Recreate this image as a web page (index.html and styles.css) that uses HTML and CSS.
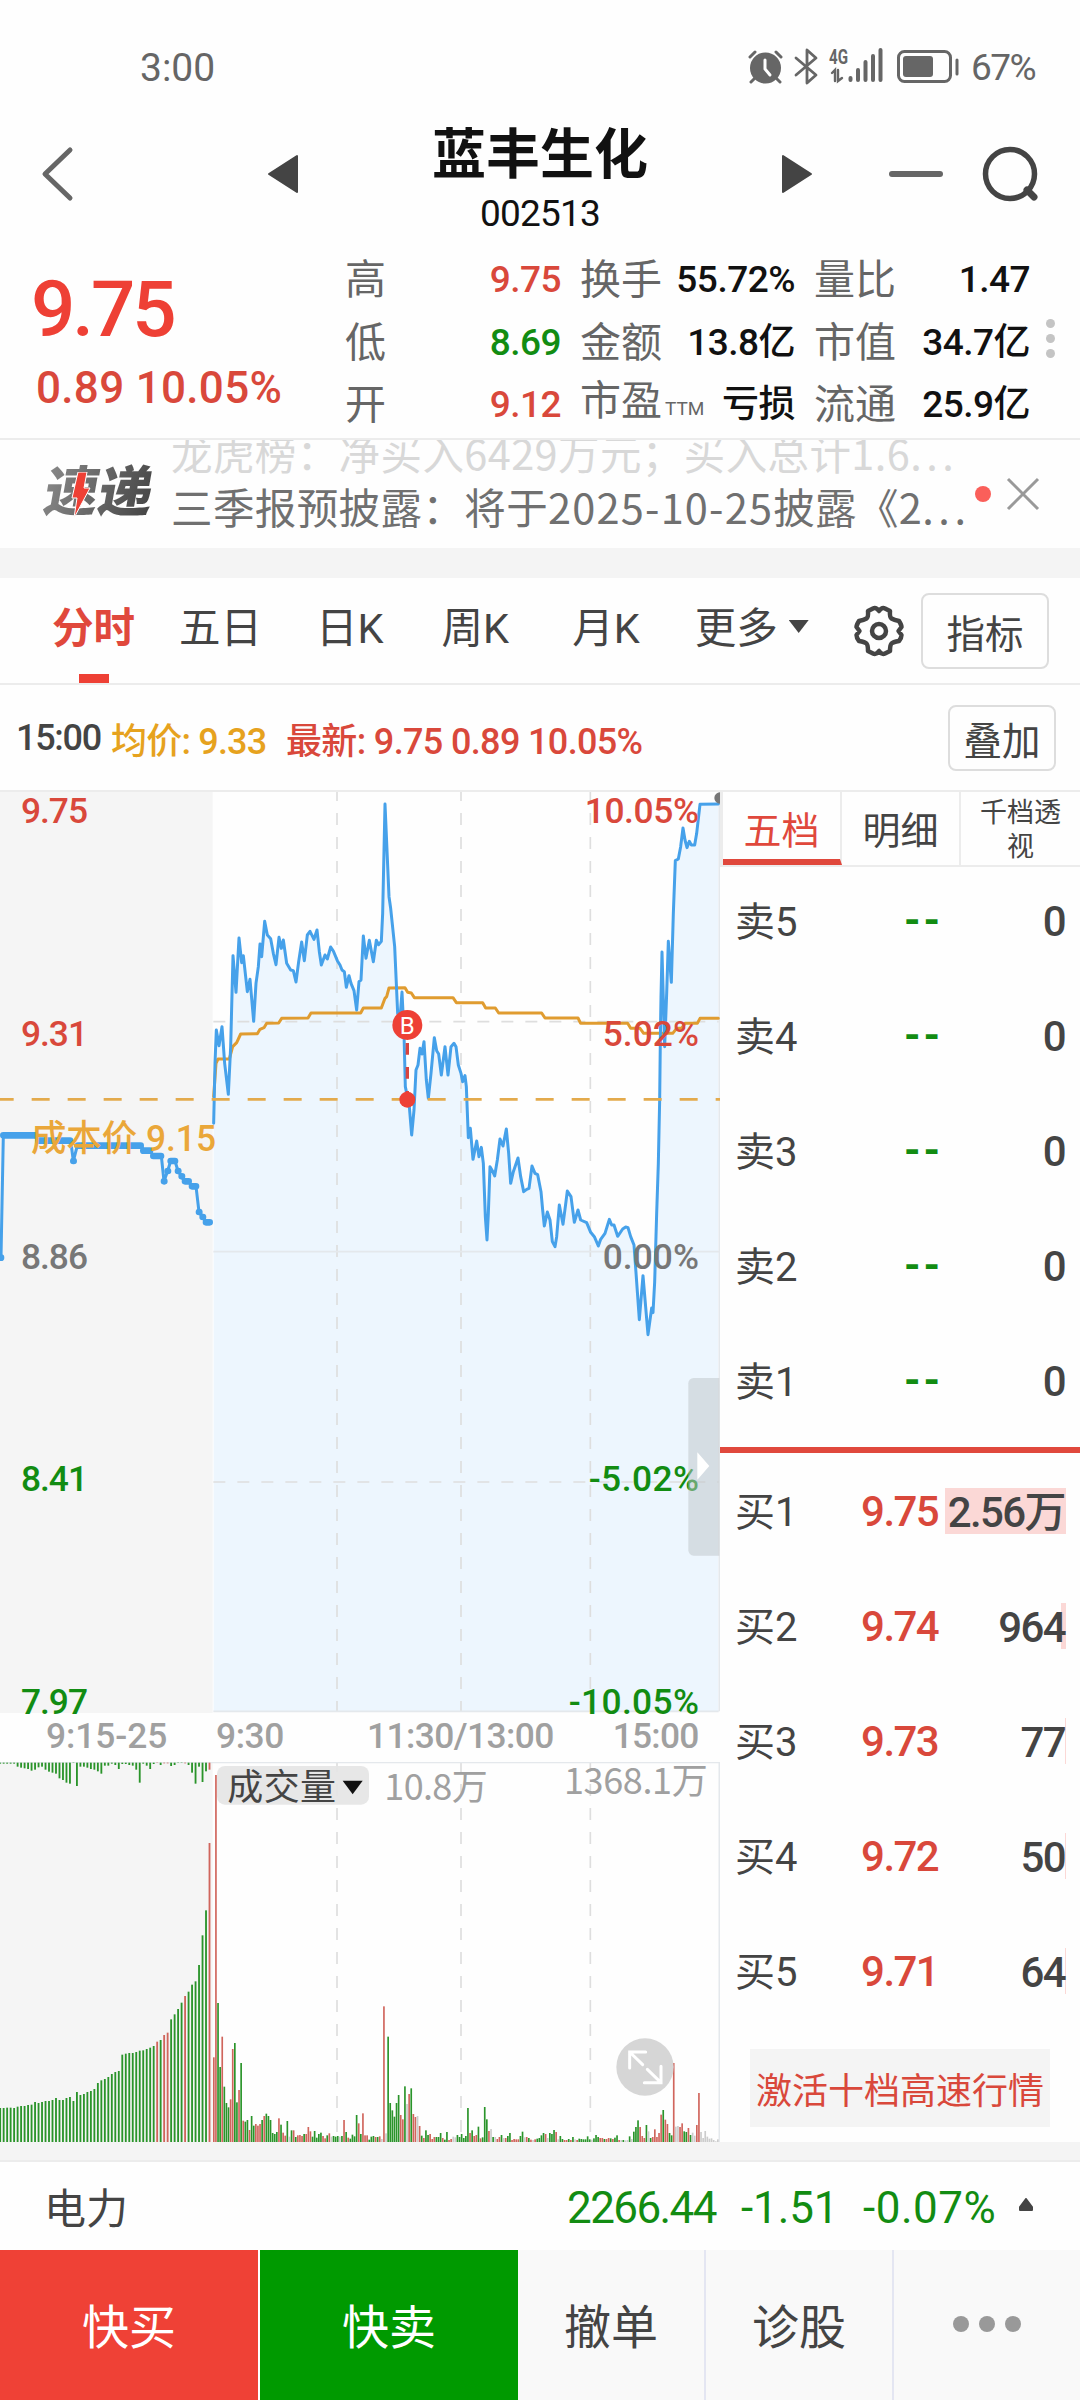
FILE: index.html
```html
<!DOCTYPE html>
<html lang="zh-CN">

<head>
    <meta charset="utf-8">
    <meta name="viewport" content="width=device-width, initial-scale=1.0">
    <title>蓝丰生化 002513</title>
    <link rel="stylesheet" href="styles.css">
</head>

<body>
    <div class="status">
        <span class="clock">3:00</span>
        <svg class="status-icons" width="214" height="44" viewBox="747 44 214 44">
            <g fill="none" stroke="#666" stroke-width="3" stroke-linecap="round">
                <circle cx="765.500" cy="67" r="15.500" fill="#666" stroke="none" />
                <path d="M750 56l5-5M781 56l-5-5M755 77l-4 4M776 77l4 4" />
                <path d="M765 59v9l5 6" stroke="#fff" />
                <path d="M796 57l20 17-9 8V49l9 8-20 17" stroke-width="2.800" stroke-linejoin="round" />
                <path d="M850.500 77v2M858 69v10M865.500 61v18M873 55v24M880.500 49v30" stroke-width="4" />
                <path d="M832 72l3-3v11M838 69v11l4-3" stroke-width="2.400" />
                <rect x="898.500" y="50.500" width="52" height="30" rx="6" />
                <rect x="903" y="55" width="30" height="21" rx="3" fill="#666" stroke="none" />
                <path d="M957 59v14" />
            </g>
            <text class="net" x="829" y="63" textLength="19" lengthAdjust="spacingAndGlyphs">4G</text>
        </svg>
        <span class="battery">67%</span>
    </div>

    <header>
        <svg class="back" width="34" height="56" viewBox="0 0 34 56">
            <path d="M30 4L5 28l25 24" fill="none" stroke="#666" stroke-width="5" stroke-linecap="round" stroke-linejoin="round" />
        </svg>
        <svg class="prev" width="32" height="40" viewBox="0 0 32 40">
            <path d="M30 2v36L2 20z" fill="#444" stroke="#444" stroke-width="2" stroke-linejoin="round" />
        </svg>
        <div class="name">
            <h1>蓝丰生化</h1>
            <p>002513</p>
        </div>
        <svg class="next" width="32" height="40" viewBox="0 0 32 40">
            <path d="M2 2v36l28-18z" fill="#444" stroke="#444" stroke-width="2" stroke-linejoin="round" />
        </svg>
        <i class="minus"></i>
        <svg class="search" width="60" height="60" viewBox="0 0 60 60">
            <circle cx="29" cy="30" r="24.500" fill="none" stroke="#444" stroke-width="5.500" />
            <path d="M46 46l7 7" stroke="#444" stroke-width="7" stroke-linecap="round" />
        </svg>
    </header>

    <section class="quote">
        <div class="now">
            <p class="last">9.75</p>
            <p class="change">0.89 10.05%</p>
        </div>
        <dl>
            <dt>高</dt>
            <dd class="up">9.75</dd>
            <dt>换手</dt>
            <dd>55.72%</dd>
            <dt>量比</dt>
            <dd>1.47</dd>
            <dt>低</dt>
            <dd class="down">8.69</dd>
            <dt>金额</dt>
            <dd>13.8亿</dd>
            <dt>市值</dt>
            <dd>34.7亿</dd>
            <dt>开</dt>
            <dd class="up">9.12</dd>
            <dt>市盈<small>TTM</small></dt>
            <dd>亏损</dd>
            <dt>流通</dt>
            <dd>25.9亿</dd>
        </dl>
        <div class="more-dots"><i></i><i></i><i></i></div>
    </section>

    <section class="news">
        <div class="express">
            <span>速递</span>
            <svg width="24" height="46" viewBox="0 0 24 46">
                <path d="M9 0h9l-3 16h6L5 46l3-20H3z" fill="#ee4035" stroke="#fff" />
            </svg>
        </div>
        <div class="ticker">
            <p class="old">龙虎榜：净买入6429万元；买入总计1.6<em>...</em></p>
            <p>三季报预披露：将于<span>2025-10-25</span>披露《2<em>...</em></p>
        </div>
        <i class="dot"></i>
        <svg class="close" width="34" height="34" viewBox="0 0 34 34">
            <path d="M2 2l30 30M32 2L2 32" stroke="#999" stroke-width="3" />
        </svg>
    </section>

    <nav>
        <a class="active">分时</a>
        <a>五日</a>
        <a>日K</a>
        <a>周K</a>
        <a>月K</a>
        <a>更多</a>
        <i class="arrow"></i>
        <svg class="gear" width="54" height="54" viewBox="0 0 54 54">
            <path d="M21 4.500Q24 3 27 7Q30 3 33 4.500L38 7Q37.500 13 39.500 14.500Q42 16 47 17Q49.500 21 49.500 23L46.500 27L49.500 31Q49.500 34 47 37Q41 38 39.500 39.500Q38 41 38 47L33 49.500Q30 51 27 47Q24 51 21 49.500L16 47Q16 41 14.500 39.500Q13 38 7 37Q4.500 34 4.500 31L7.500 27L4.500 23Q4.500 21 7 17Q12 16 14.500 14.500Q16.500 13 16 7z" fill="none" stroke="#444" stroke-width="4.500" stroke-linejoin="round" />
            <circle cx="27" cy="27" r="7" fill="none" stroke="#444" stroke-width="4.500" />
        </svg>
        <button class="index-btn">指标</button>
    </nav>

    <section class="info">
        <span class="time">15:00</span>
        <span class="avg">均价: 9.33</span>
        <span class="new">最新: 9.75 0.89 10.05%</span>
        <button>叠加</button>
    </section>

    <main>
        <div class="charts">
            <!-- three units per pixel -->
            <svg class="price" width="720" height="970" viewBox="0 36 2160 2910">
                <rect x="0" y="36" width="638" height="2763" fill="#f5f5f5" />
                <polygon id="area" fill="#edf6fe" />
                <g class="grid">
                    <path d="M1011 27V2794M1383 27V2794M1771 27V2794" />
                    <path d="M640 725H2156M640 2106H2156" />
                    <path class="solid" d="M640 1415H2156M640 2794H2156M2158 36V2794" />
                </g>
                <polyline class="avg-line" points="641,950 648,850 654,837 688,837 698,800 710,788 722,762 772,761 780,748 792,743 800,730 836,729 845,715 924,714 933,699 1082,699 1090,684 1144,684 1155,655 1160,650 1167,624 1215,623 1223,637 1234,639 1243,653 1359,653 1369,668 1448,668 1457,684 1486,684 1496,699 1625,699 1635,714 1734,714 1742,730 1883,730 1892,745 1920,745 1931,760 2018,760 2030,745 2045,745 2055,730 2092,730 2100,715 2155,715" />
                <polyline class="pre" points="3,1433 10,1066 105,1066 112,1082 212,1082 220,1143 232,1097 425,1097 430,1112 450,1112 460,1128 484,1128 492,1204 503,1173 512,1143 525,1143 534,1173 545,1189 555,1204 566,1204 576,1219 588,1219 597,1296 608,1311 618,1327 630,1327" />
                <path class="beads" d="M2 1433h1M10 1066H105M115 1082H210M220 1143h1M234 1097H422M430 1112H450M460 1128H483M492 1204h1M503 1173h1M512 1143H525M534 1173h1M545 1189h1M555 1204H566M576 1219H588M597 1296h1M608 1311h1M618 1327H629" />
                <polyline id="line" class="line" points="641,1030 645,850 649,750 657,797 666,740 674,850 685,943 692,800 699,527 708,637 717,474 725,548 730,527 742,635 750,598 761,724 768,610 775,560 780,492 785,530 794,424 802,465 812,476 820,520 828,554 837,472 844,505 850,480 860,550 872,570 880,572 888,606 896,545 905,486 913,542 922,465 930,454 942,478 951,450 958,515 964,555 975,525 982,537 992,501 1000,513 1012,542 1020,555 1026,570 1033,575 1039,622 1047,587 1053,610 1062,632 1070,690 1077,605 1083,600 1090,468 1098,535 1108,481 1120,545 1129,481 1136,494 1144,484 1148,400 1155,72 1167,350 1172,385 1184,500 1193,700 1200,715 1206,636 1212,760 1216,920 1228,980 1235,1065 1242,990 1248,870 1254,855 1260,805 1266,822 1272,785 1279,900 1285,955 1293,880 1303,773 1310,812 1316,822 1324,885 1335,800 1344,885 1353,800 1362,790 1368,800 1375,855 1383,880 1388,905 1395,887 1399,920 1405,1073 1411,1045 1419,1138 1430,1083 1437,1130 1444,1102 1450,1150 1456,1310 1461,1380 1465,1300 1470,1160 1477,1172 1484,1188 1492,1140 1500,1077 1509,1098 1519,1047 1526,1120 1532,1210 1540,1175 1554,1134 1562,1190 1571,1235 1580,1228 1587,1225 1596,1158 1605,1180 1613,1184 1623,1235 1628,1290 1633,1338 1642,1296 1650,1320 1657,1385 1665,1400 1670,1370 1678,1275 1689,1333 1696,1280 1702,1233 1713,1250 1723,1327 1734,1290 1742,1320 1760,1328 1772,1357 1783,1370 1795,1398 1802,1378 1815,1360 1828,1318 1835,1335 1842,1335 1853,1369 1868,1347 1877,1341 1884,1343 1892,1370 1902,1395 1906,1450 1918,1619 1929,1487 1944,1664 1955,1584 1959,1598 1964,1506 1970,1300 1975,1150 1979,960 1981,780 1983,650 1986,516 1994,800 2000,640 2005,484 2014,607 2020,400 2026,242 2035,237 2042,200 2049,144 2055,180 2061,203 2068,184 2074,195 2084,195 2090,160 2100,73 2155,72" />
                <path d="M-13 958H2160" class="cost-line" />
                <path d="M2160 40a14 14 0 0 0 0 28z" fill="#777" stroke="#777" stroke-width="6" />

                <path d="M1222 789V940" stroke="#d9443f" stroke-width="10" stroke-dasharray="35 37" />
                <circle cx="1222" cy="959" r="24" fill="#ee4035" />
                <circle cx="1222" cy="735" r="45" fill="#ee4035" />
                <text class="buy-mark" x="1222" y="761">B</text>

                <text class="cost" x="93" y="1113" textLength="555" lengthAdjust="spacingAndGlyphs">成本价 9.15</text>

                <g class="label up">
                    <text x="63" y="128" textLength="201">9.75</text>
                    <text x="63" y="797" textLength="201">9.31</text>
                    <text x="1754" y="128" textLength="343">10.05%</text>
                    <text x="1808" y="797" textLength="289">5.02%</text>
                </g>
                <g class="label flat">
                    <text x="63" y="1466" textLength="201">8.86</text>
                    <text x="1808" y="1466" textLength="289">0.00%</text>
                </g>
                <g class="label down">
                    <text x="63" y="2132" textLength="201">8.41</text>
                    <text x="63" y="2801" textLength="201">7.97</text>
                    <text x="1766" y="2132" textLength="331">-5.02%</text>
                    <text x="1706" y="2801" textLength="391">-10.05%</text>
                </g>
                <g class="label axis">
                    <text x="138" y="2904" textLength="364">9:15-25</text>
                    <text x="648" y="2904" textLength="205">9:30</text>
                    <text x="1101" y="2904" textLength="562">11:30/13:00</text>
                    <text x="1838" y="2904" textLength="260">15:00</text>
                </g>

                <path d="M2158 1794H2081a16 16 0 0 0-16 16V2311a16 16 0 0 0 16 16H2158z" fill="rgba(190,195,200,.5)" />
                <path d="M2092 2017v82l36-41z" fill="#fff" />
            </svg>

            <svg class="volume" width="720" height="380" viewBox="0 66 2160 1140">
                <rect x="0" y="66" width="638" height="1140" fill="#f5f5f5" />
                <g class="grid">
                    <path d="M1011 60V1176M1383 60V1176M1771 60V1176" />
                    <path class="solid" d="M0 67H2160M2158 67V1206" />
                </g>
                <g id="bars"></g>
                <rect x="651" y="78" width="456" height="116" rx="24" fill="#e5e5e5" fill-opacity=".93" />
                <text class="vol-name" x="682" y="180" textLength="326">成交量</text>
                <path d="M1028 122h60l-30 41z" fill="#111" />
                <text class="vol-num" x="1153" y="181" textLength="310">10.8万</text>
                <text class="vol-num" x="1692" y="163" textLength="431">1368.1万</text>
                <circle cx="1935" cy="981" r="86" fill="#d6d6d6" />
                <path d="M1937 936h-48v48M1889 936l39 38M1942 988l41 40M1983 979v49h-50" fill="none" stroke="#fff" stroke-width="9" stroke-linecap="round" />
            </svg>
        </div>

        <aside>
            <div class="book-tabs">
                <a class="active">五档</a>
                <a>明细</a>
                <a class="small">千档透视</a>
            </div>
            <ul class="sell">
                <li><b>卖5</b><span class="price-col">--</span><span class="qty">0</span></li>
                <li><b>卖4</b><span class="price-col">--</span><span class="qty">0</span></li>
                <li><b>卖3</b><span class="price-col">--</span><span class="qty">0</span></li>
                <li><b>卖2</b><span class="price-col">--</span><span class="qty">0</span></li>
                <li><b>卖1</b><span class="price-col">--</span><span class="qty">0</span></li>
            </ul>
            <ul class="buy">
                <li><b>买1</b><span class="price-col">9.75</span><span class="qty" style="background-size: 121px 100%">2.56万</span></li>
                <li><b>买2</b><span class="price-col">9.74</span><span class="qty" style="background-size: 5px 100%">964</span></li>
                <li><b>买3</b><span class="price-col">9.73</span><span class="qty" style="background-size: 1px 100%">77</span></li>
                <li><b>买4</b><span class="price-col">9.72</span><span class="qty" style="background-size: 1px 100%">50</span></li>
                <li><b>买5</b><span class="price-col">9.71</span><span class="qty" style="background-size: 1px 100%">64</span></li>
            </ul>
            <button class="activate">激活十档高速行情</button>
        </aside>
    </main>

    <section class="sector">
        <span class="sector-name">电力</span>
        <span class="n1">2266.44</span>
        <span class="n2">-1.51</span>
        <span class="n3">-0.07%</span>
        <svg width="16" height="14" viewBox="0 0 16 14">
            <path d="M8 1l6 8v3H2V9z" fill="#444" stroke="#444" stroke-width="2" stroke-linejoin="round" />
        </svg>
    </section>

    <footer>
        <button class="fast-buy">快买</button>
        <button class="fast-sell">快卖</button>
        <button>撤单</button>
        <button>诊股</button>
        <button class="dots"><i></i><i></i><i></i></button>
    </footer>

    <script>
        // top of every bar, r = red, g = green, x = grey
        const auction = "1104 1104 1103 1103 1104 1100 1098 1098 1095 1094 1086 1089 1086 1083 1083 1080 1074 1080 1080 1074 1071 1083 1056 1065 1062 1056 1053 1047 1029 1021 1017 1011 1002 996 993 944 941 939 939 936 932 931 927 923 918 905r 900 885r 878r 838 823 807 788 768r 755 734 724 675 586 511 309r";
        const unmatched = "71 71 71 71 71 80 83 85 87 92 89 82 80 89 95 98 101 115 120 128 131 69 138 80 80 83 87 89 94 101 77 77 71 75 87 72 72 75 77 89 128 71 77 87 72 69r 75 70r 70r 78 75 69 69 70r 75 98 131 80 126 94 89r";
        const minutes = "952r 105r 789g 981g 890r 1040g 1089g 1102g 1078r 927r 909g 1087g 1050r 969g 1142r 1145g 1140g 1170r 1128g 1157g 1152r 1157r 1152r 1140g 1128r 1121g 1128g 1140g 1179g 1182g 1176g 1135r 1154g 1178r 1187r 1143g 1190x 1171g 1171r 1191g 1186r 1185r 1188r 1182g 1182r 1161r 1174r 1190g 1173g 1193g 1182g 1178g 1188r 1195r 1186g 1180r 1190x 1188g 1190g 1188g 1190x 1188g 1140r 1176g 1193r 1196g 1184g 1189g 1125g 1150r 1182g 1120r 1186r 1186r 1199g " +
            "1190g 1188g 1191r 1191g 1189r 1197x 799r 1180x 890g 1089g 1111g 1130g 1089g 1065g 1125r 1138r 1039g 1092x 1062r 1045g 1122r 1131r 1128x 1158r 1187g 1194r 1171g 1185g 1182r 1197r 1191r 1191g 1191g 1179g 1194r 1199g 1176g 1200r 1197r 1190x 1192x 1185g 1191g 1182g 1194g 1188g 1104g 1179r 1171g 1188r 1185r 1160g 1195r 1192g 1101g 1138g 1173r 1167x 1191g 1191x 1197r 1191r 1185g 1194x 1194r 1188g 1179g 1200r 1197r 1198r 1198r 1188g 1175g 1192x 1191r 1194g 1199r 1200x 1198r 1196g 1194g 1186g 1179g 1182r 1194x 1179g 1182g 1170g 1176r 1198x 1188g 1197g 1200r 1200r 1197g 1200r 1191g 1198x 1200r 1196g 1197g 1198g 1198g 1189g 1198g 1199x 1195g 1185g 1191g 1194r 1194r 1197g 1197r 1194r 1195g 1197r 1193g 1186g 1200r 1200x 1200g 1201x 1200x 1189g 1197x 1175g 1161g 1141g 1161r 1188r 1194r 1155g 1174x 1194g 1191r 1168r 1191r 1179r 1124r 1110g 1139r 1152r 1179g 1186g 969r 1160x 1158x 1161r 1150r 1174g 1176g 1164r 1185g 1178x 1187x 1155r 1059r 1176x 1194x 1173x 1190x 1196x 1195x 1200x 1204x 1198x";
        const bars = document.querySelector("#bars");

        function draw(list, start, step, width, hang) {
            list.split(" ").forEach((item, i) => {
                const y = parseInt(item);
                const bar = document.createElementNS("http://www.w3.org/2000/svg", "rect");
                bar.setAttribute("x", start + i * step - width / 2);
                bar.setAttribute("y", hang ? 68 : y);
                bar.setAttribute("width", width);
                bar.setAttribute("height", hang ? y - 68 : 1206 - y);
                bar.setAttribute("class", item.endsWith("r") ? "bar-up" : item.endsWith("x") ? "bar-flat" : "bar-down");
                bars.appendChild(bar);
            });
        }

        draw(auction, 0.5, 10.467, 5.5, false);
        draw(unmatched, 0.5, 10.467, 5.5, true);
        draw(minutes, 641.5, 6.3, 5, false);

        // fill under the price line
        document.querySelector("#area").setAttribute("points",
            document.querySelector("#line").getAttribute("points") + " 2155,2794 641,2794");
    </script>
</body>

</html>
```
FILE: styles.css
```css
* {
    margin: 0;
    padding: 0;
    box-sizing: border-box;
}

body {
    width: 1080px;
    height: 2400px;
    overflow: hidden;
    background: #fefefe;
    color: #444;
    font-family: Roboto, "Noto Sans CJK SC", sans-serif;
}

svg {
    display: block;
    flex: none;
}

button {
    font-family: inherit;
    color: #444;
    background: none;
    border: 0;
}

.up {
    color: #d9483b;
    fill: #d9483b;
}

.down {
    color: #128c12;
    fill: #128c12;
}

/* status bar */
.status {
    height: 121px;
    padding: 13px 42px 0 140px;
    display: flex;
    align-items: center;
    color: #666;
    font-size: 39px;
    line-height: 40px;
}

.clock {
    flex: 1;
    padding-top: 2px;
}

.status-icons {
    margin-right: 10px;
}

.net {
    font-size: 20px;
    font-weight: bold;
    fill: #666;
}

.battery {
    width: 67px;
    padding-top: 2px;
    font-size: 37px;
    letter-spacing: -1.5px;
    white-space: nowrap;
}

/* title */
header {
    height: 119px;
    padding-left: 40px;
    display: flex;
    align-items: flex-start;
}

.back {
    margin-top: 25px;
}

.prev {
    margin: 33px 0 0 193px;
}

.name {
    width: 482px;
    text-align: center;
    color: #111;
}

.name h1 {
    margin-top: 2px;
    font-size: 54px;
    line-height: 66px;
    font-weight: bold;
}

.name p {
    font-size: 37px;
    line-height: 50px;
    letter-spacing: -.8px;
}

.next {
    margin-top: 33px;
}

.minus {
    width: 54px;
    height: 6px;
    margin: 50px 0 0 76px;
    border-radius: 3px;
    background: #666;
}

.search {
    margin: 23px 0 0 38px;
}

/* quote */
.quote {
    display: flex;
    height: 200px;
    border-bottom: 2px solid #ececec;
}

.now {
    width: 345px;
    padding: 24px 0 0 31px;
    color: #ee4035;
}

.last {
    font-size: 78px;
    line-height: 92px;
    font-weight: 500;
    letter-spacing: -3px;
}

.change {
    padding-left: 5px;
    font-size: 44px;
    line-height: 60px;
    margin-top: 2px;
    letter-spacing: .3px;
    color: #d9483b;
    font-weight: 500;
}

.quote dl {
    width: 686px;
    padding-top: 9px;
    display: grid;
    grid-template-columns: 100px 117px 134px 100px 133px 102px;
    grid-auto-rows: 62.5px;
    align-items: center;
}

.quote dt {
    font-size: 41px;
    line-height: 62px;
    color: #666;
    white-space: nowrap;
}

.quote dt:nth-of-type(3n + 2),
.quote dt:nth-of-type(3n) {
    padding-left: 18px;
}

.quote dd {
    display: flex;
    justify-content: flex-end;
    padding-right: 1px;
    font-size: 37px;
    line-height: 62px;
    font-weight: 500;
    letter-spacing: -.5px;
    color: #111;
    white-space: nowrap;
}

.quote dd.up {
    color: #d9483b;
}

.quote dd.down {
    color: #128c12;
}

.quote small {
    font-size: 19px;
    margin-left: 3px;
}

.more-dots {
    padding: 79px 0 0 15px;
}

.more-dots i {
    display: block;
    width: 9px;
    height: 9px;
    margin-bottom: 6px;
    border-radius: 50%;
    background: #c4c4c4;
}

/* news */
.news {
    height: 108px;
    display: flex;
    overflow: hidden;
}

.express {
    position: relative;
    width: 171px;
    padding: 20px 0 0 45px;
}

.express span {
    display: inline-block;
    font-size: 54px;
    line-height: 66px;
    font-weight: 900;
    background: linear-gradient(100deg, #888, #444);
    background-clip: text;
    -webkit-background-clip: text;
    color: transparent;
    transform: skewX(-10deg);
}

.express svg {
    position: absolute;
    left: 69px;
    top: 32px;
}

.ticker {
    width: 800px;
    margin-top: -15px;
    font-family: "Noto Sans CJK SC", sans-serif;
    font-size: 41.5px;
    line-height: 54px;
    letter-spacing: .4px;
    color: #707070;
    white-space: nowrap;
}

.ticker span {
    letter-spacing: 1.2px;
}

.ticker em {
    font-style: normal;
    letter-spacing: 4.5px;
}

.ticker .old {
    color: #d8d8d8;
}

.dot {
    width: 16px;
    height: 16px;
    margin: 46px 0 0 4px;
    border-radius: 50%;
    background: #fa5f5a;
}

.close {
    margin: 37px 0 0 15px;
}

/* period tabs */
nav {
    display: flex;
    height: 137px;
    padding-left: 52px;
    border-top: 30px solid #f4f4f4;
    border-bottom: 2px solid #ececec;
}

nav a {
    position: relative;
    font-size: 41.5px;
    line-height: 102px;
    margin-right: 44px;
    white-space: nowrap;
}

nav a:nth-of-type(3) {
    margin: 0 58px 0 10px;
}

nav a:nth-of-type(4) {
    margin-right: 63px;
}

nav a:nth-of-type(5) {
    margin-right: 55px;
}

nav a:nth-of-type(6) {
    margin-right: 11px;
}

nav .active {
    color: #e0483c;
    font-weight: bold;
}

nav .active::after {
    content: "";
    position: absolute;
    left: 27px;
    top: 96px;
    width: 30px;
    height: 9px;
    background: #ee4035;
}

.arrow {
    margin-top: 42px;
    width: 20px;
    height: 13px;
    background: #444;
    clip-path: polygon(0 0, 100% 0, 50% 100%);
}

.gear {
    margin: 26px 0 0 43px;
}

.index-btn,
.info button {
    border: 2px solid #ddd;
    border-radius: 8px;
    font-size: 38.5px;
}

.index-btn {
    width: 128px;
    height: 76px;
    margin: 15px 31px 0 auto;
}

/* price info */
.info {
    height: 107px;
    padding: 1px 24px 0 16px;
    display: flex;
    align-items: center;
    font-size: 36px;
    font-weight: 500;
    letter-spacing: -1.3px;
    border-bottom: 2px solid #ececec;
}

.time {
    width: 95px;
}

.avg {
    width: 175px;
    letter-spacing: -.8px;
    color: #e6a21e;
}

.new {
    letter-spacing: -.65px;
    color: #d9483b;
}

.info button {
    width: 108px;
    height: 66px;
    margin-left: auto;
}

/* charts */
main {
    display: flex;
    height: 1350px;
}

.charts {
    width: 720px;
}

.grid path {
    stroke: #dedede;
    stroke-width: 5;
    stroke-dasharray: 36 36;
}

.grid .solid {
    stroke: #e4e8ec;
    stroke-dasharray: none;
}

.avg-line,
.pre,
.line {
    fill: none;
    stroke-width: 9;
    stroke-linejoin: round;
    stroke-linecap: round;
}

.avg-line {
    stroke: #e09c30;
}

.pre,
.line {
    stroke: #46a1ea;
}

.beads {
    stroke: #46a1ea;
    stroke-width: 20;
    stroke-linecap: round;
}

.cost-line {
    stroke: #e3aa4c;
    stroke-width: 8;
    stroke-dasharray: 54 54;
}

.buy-mark {
    font-size: 72px;
    text-anchor: middle;
    fill: #fff;
}

.cost {
    font-size: 110px;
    font-weight: 500;
    fill: #eaa739;
}

.label {
    font-size: 106px;
    font-weight: 500;
}

.flat {
    fill: #777;
}

.axis {
    fill: #a0a0a0;
}

.vol-name,
.vol-num {
    font-family: "Noto Sans CJK SC", sans-serif;
    font-size: 108px;
    fill: #444;
}

.vol-num {
    fill: #a0a0a0;
}

.bar-up {
    fill: #d0655c;
}

.bar-down {
    fill: #2a942a;
}

.bar-flat {
    fill: #ccc;
}

/* order book */
aside {
    width: 360px;
}

.book-tabs {
    display: flex;
    height: 75px;
    border-bottom: 2px solid #ececec;
    border-left: 3px solid #ececec;
}

.book-tabs a {
    width: 119px;
    font-size: 38px;
    line-height: 79px;
    text-align: center;
    border-right: 2px solid #ececec;
}

.book-tabs .active {
    color: #e0483c;
    border-bottom: 6px solid #e0483c;
}

.book-tabs .small {
    border: 0;
    padding: 4px 18px 0;
    font-size: 27px;
    line-height: 34px;
}

ul {
    list-style: none;
}

li {
    display: flex;
    align-items: center;
    height: 115px;
    padding: 0 14px 0 15px;
    font-size: 42px;
    font-weight: 500;
    letter-spacing: -1.6px;
}

li b {
    width: 80px;
    padding-bottom: 3px;
    font-size: 40px;
    font-weight: normal;
    letter-spacing: 0;
}

.price-col {
    width: 123px;
    text-align: right;
    color: #d9483b;
}

.qty {
    flex: 1;
    height: 46px;
    line-height: 47px;
    padding-right: 1px;
    text-align: right;
    background: linear-gradient(#fbd8d6, #fbd8d6) right no-repeat;
    background-size: 0 100%;
}

.sell {
    margin-top: -4px;
    padding-bottom: 9px;
    border-bottom: 6px solid #e0483c;
}

.sell .price-col {
    width: 128px;
    color: #128c12;
    font-weight: bold;
    letter-spacing: 3px;
}

.buy {
    margin-bottom: 21px;
}

.buy .price-col {
    padding-top: 2px;
}

.buy .qty {
    line-height: 49px;
}

.activate {
    display: block;
    width: 300px;
    height: 78px;
    margin-left: 30px;
    background: #f4f4f4;
    color: #d9483b;
    font-size: 36px;
}

/* sector index */
.sector {
    display: flex;
    align-items: center;
    height: 108px;
    padding-left: 44px;
    border-top: 18px solid #f4f4f4;
    box-shadow: inset 0 2px #ececec;
    color: #128c12;
    font-size: 44px;
    letter-spacing: -1.6px;
}

.sector-name {
    width: 523px;
    color: #444;
    font-size: 42px;
    letter-spacing: 0;
}

.n1,
.n2,
.n3 {
    padding-top: 6px;
}

.n1 {
    width: 174px;
}

.n2 {
    width: 122px;
    letter-spacing: -.1px;
}

.n3 {
    width: 155px;
    letter-spacing: .5px;
}

/* bottom bar */
footer {
    display: flex;
    height: 150px;
    background: #f9f9f9;
}

footer button {
    width: 188px;
    padding-bottom: 3px;
    font-size: 47px;
    border-right: 2px solid #e4e6f2;
}

footer .fast-buy,
footer .fast-sell {
    width: 260px;
    color: #fff;
    background: #ef4136;
    border-right: 2px solid #fff;
}

footer .fast-sell {
    width: 258px;
    background: #009a00;
    border: 0;
}

footer .dots {
    flex: 1;
    display: flex;
    align-items: center;
    justify-content: center;
    gap: 10px;
    border: 0;
}

.dots i {
    width: 16px;
    height: 16px;
    border-radius: 50%;
    background: #999;
}
```
